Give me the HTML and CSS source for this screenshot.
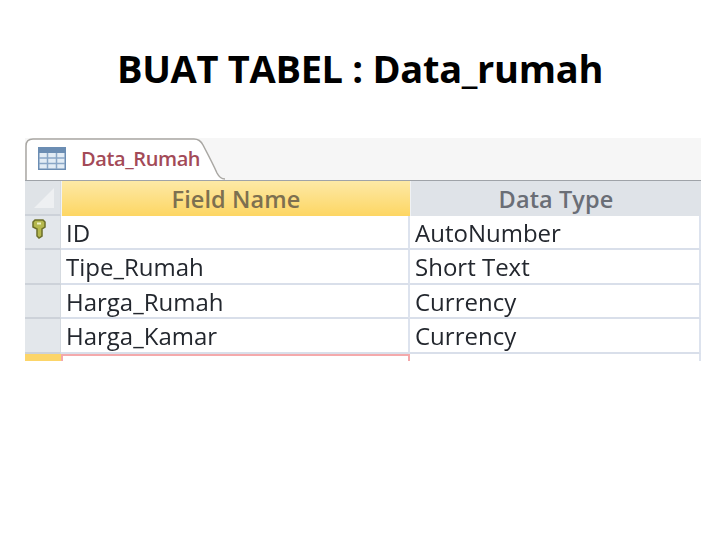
FILE: index.html
```html
<!DOCTYPE html>
<html lang="en">
<head>
    <meta charset="UTF-8">
    <meta name="viewport" content="width=device-width, initial-scale=1.0">
    <title>Buat Tabel</title>
    <link rel="stylesheet" href="styles.css">
</head>
<body>

    <h1 class="title">BUAT TABEL : Data_rumah</h1>

    <div class="shot">
        <!-- Tab strip -->
        <div class="tabstrip">
            <div class="tab">
                <svg class="tab-shape" width="202" height="42" viewBox="0 0 202 42">
                    <path d="M1 42 V8 Q1 1 8 1 H169 Q175 1 178 7 Q188 26 192 35 Q195 41 200 41 V42 Z" fill="#fff"/>
                    <path d="M1 42 V8 Q1 1 8 1 H169 Q175 1 178 7 Q188 26 192 35 Q195 41 200 41" fill="none" stroke="#a9a7a3" stroke-width="1.5"/>
                </svg>
                <svg class="tab-icon" width="28" height="23" viewBox="0 0 28 23">
                    <rect width="28" height="23" fill="#6b8db3"/>
                    <rect x="1.500" y="6" width="25" height="15.500" fill="#e2ecf5"/>
                    <path d="M9.500 6 V22 M18.500 6 V22 M1 11 H27 M1 16.500 H27" stroke="#8aa7c7" stroke-width="1.500"/>
                </svg>
                <span class="tab-label">Data_Rumah</span>
            </div>
        </div>

        <!-- Design grid -->
        <div class="grid">
            <div class="selector corner">
                <svg width="22" height="22" viewBox="0 0 22 22"><path d="M2 22 L22 2 V22 Z"/></svg>
            </div>
            <div class="head head-active">Field Name</div>
            <div class="head">Data Type</div>

            <div class="selector key">
                <svg width="14" height="20" viewBox="0 0 14 20">
                    <path d="M3 1 H11 L13 3 V8 L10 10 V17 L7 19 L5 17 V10 L1 8 V3 Z" fill="#b5b84e" stroke="#6c6f2a" stroke-width="1.500"/>
                    <rect x="5" y="3.500" width="4" height="2" fill="#eef0c4"/>
                </svg>
            </div>
            <div class="cell">ID</div>
            <div class="cell">AutoNumber</div>

            <div class="selector"></div>
            <div class="cell">Tipe_Rumah</div>
            <div class="cell">Short Text</div>

            <div class="selector"></div>
            <div class="cell">Harga_Rumah</div>
            <div class="cell">Currency</div>

            <div class="selector"></div>
            <div class="cell">Harga_Kamar</div>
            <div class="cell">Currency</div>

            <div class="selector selector-active"></div>
            <div class="cell-new"></div>
            <div class="cell-blank"></div>
        </div>
    </div>

</body>
</html>
```

FILE: styles.css
```css
body {
    margin: 0;
    background-color: #fff;
    font-family: "Open Sans", Arial, sans-serif;
}

.title {
    margin: 0;
    padding-top: 43px;
    height: 96px;
    box-sizing: border-box;
    text-align: center;
    font-size: 38px;
    line-height: 50px;
    font-weight: 700;
    letter-spacing: -0.3px;
    color: #000;
}

.shot {
    width: 676px;
    margin: 42px 0 0 25px;
}

.tabstrip {
    height: 42px;
    background-color: #f6f6f6;
}

.tab {
    position: relative;
    display: flex;
    align-items: center;
    width: 202px;
    height: 42px;
}

.tab-shape {
    position: absolute;
    left: 0;
    top: 0;
}

.tab-icon {
    position: relative;
    margin: 0 0 2px 13px;
}

.tab-label {
    position: relative;
    margin: 0 0 2px 15px;
    font-size: 20px;
    font-weight: 600;
    letter-spacing: -0.4px;
    color: #a34a57;
}

.grid {
    display: grid;
    grid-template-columns: 36px 349px 291px;
    grid-template-rows: 35px 34px 35px 34px 35px 7px;
    border-top: 1px solid #9fa3a8;
    height: 180px;
    overflow: hidden;
    filter: blur(0.4px);
}

.selector {
    background-color: #e3e7eb;
    border-bottom: 2px solid #cdd2d9;
    border-right: 1px solid #d5dae0;
    box-sizing: border-box;
}

.corner {
    display: flex;
    align-items: flex-end;
    justify-content: center;
    background-color: #dfe3e7;
    padding-bottom: 6px;
}

.corner svg path {
    fill: #eef0f2;
}

.key {
    padding: 3px 0 0 7px;
}

.selector-active {
    background-color: #fcd569;
    border: none;
}

.head {
    display: flex;
    align-items: center;
    justify-content: center;
    background-color: #dfe3e8;
    border-left: 1px solid #f0f2f4;
    font-size: 23.500px;
    font-weight: 600;
    letter-spacing: 0.1px;
    color: #6a6e76;
}

.head-active {
    background: linear-gradient(#fde9a6, #fdd663);
    color: #7d7050;
}

.cell {
    display: flex;
    align-items: center;
    padding-left: 5px;
    background-color: #fff;
    border-bottom: 2px solid #d9dfea;
    border-right: 2px solid #dde3ee;
    box-sizing: border-box;
    font-size: 24px;
    font-weight: 500;
    letter-spacing: 0;
    color: #23272e;
}

.cell-new {
    background-color: #fff;
    border: 2px solid #f4a9ab;
    border-bottom: none;
}

.cell-blank {
    background-color: #fff;
    border-right: 2px solid #dde3ee;
}
```
